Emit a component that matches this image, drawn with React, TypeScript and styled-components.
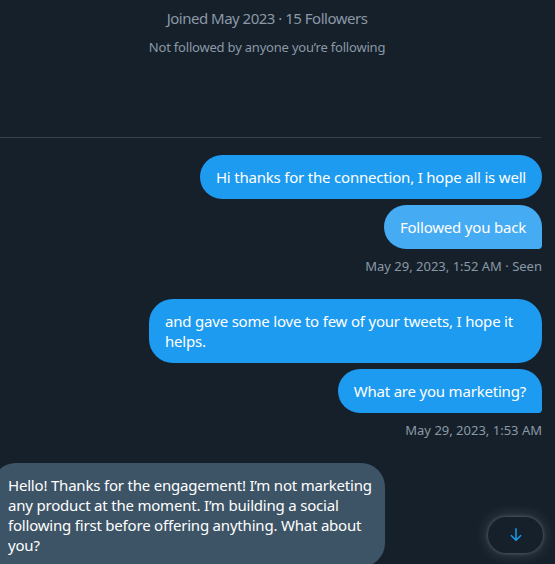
import React from "react";
import styled, { createGlobalStyle } from "styled-components";

const Global = createGlobalStyle`
  html, body { margin: 0; padding: 0; background: #15202b; }
  body { font-family: "Noto Sans", "Liberation Sans", sans-serif; color: #e7e9ea; }
  #root { width: 555px; height: 564px; overflow: hidden; position: relative; }
`;

const Page = styled.div`
  width: 550px;
  margin-left: -8px;
  display: flex;
  flex-direction: column;
  letter-spacing: -0.2px;
`;

const ProfileInfo = styled.div`
  display: flex;
  flex-direction: column;
  align-items: center;
  padding-top: 8px;
  color: #8b98a5;
`;

const InfoLine = styled.div<{ $small?: boolean }>`
  font-size: ${(p) => (p.$small ? "13px" : "15px")};
  line-height: ${(p) => (p.$small ? "16px" : "20px")};
  letter-spacing: ${(p) => (p.$small ? "-0.2px" : "-0.5px")};
  margin-top: ${(p) => (p.$small ? "11px" : "0")};
`;

const Divider = styled.div`
  margin-top: 82px;
  height: 1px;
  width: 549px;
  background: #38444d;
`;

const Thread = styled.div`
  display: flex;
  flex-direction: column;
  padding-top: 17px;
`;

const Group = styled.div<{ $in?: boolean }>`
  display: flex;
  flex-direction: column;
  align-items: ${(p) => (p.$in ? "flex-start" : "flex-end")};
  gap: 6px;
  margin-bottom: ${(p) => (p.$in ? "0" : "25px")};
`;

const Bubble = styled.div<{ $in?: boolean; $last?: boolean; $light?: boolean }>`
  max-width: 393px;
  box-sizing: border-box;
  padding: ${(p) => (p.$in ? "12px 12px 12px 16px" : "12px 16px")};
  font-size: 15px;
  line-height: 20px;
  color: #ffffff;
  background: ${(p) => (p.$in ? "#3d5466" : p.$light ? "#45abf2" : "#1d9bf0")};
  border-radius: 24px;
  ${(p) => (p.$last && !p.$in ? "border-bottom-right-radius: 4px;" : "")}
  ${(p) => (p.$in ? "border-bottom-left-radius: 4px;" : "")}
  overflow-wrap: break-word;
`;

const Meta = styled.div`
  margin-top: 3px;
  font-size: 13px;
  line-height: 16px;
  letter-spacing: 0;
  color: #8b98a5;
`;

const ScrollButton = styled.button`
  position: absolute;
  right: 12px;
  bottom: 11px;
  width: 55px;
  height: 36px;
  border: none;
  border-radius: 9999px;
  background: #15202b;
  box-shadow: rgba(255, 255, 255, 0.2) 0 0 15px, rgba(255, 255, 255, 0.15) 0 0 3px 1px;
  display: flex;
  align-items: center;
  justify-content: center;
  padding: 0;
  cursor: pointer;
`;

const ArrowIcon = () => (
  <svg width="18" height="18" viewBox="0 0 24 24" fill="#1d9bf0" aria-hidden="true">
    <path d="M13 3v13.59l5.043-5.05 1.414 1.42L12 20.41l-7.457-7.45 1.414-1.42L11 16.59V3h2z" />
  </svg>
);

export default function App() {
  return (
    <>
      <Global />
      <Page>
        <ProfileInfo>
          <InfoLine>Joined May 2023 · 15 Followers</InfoLine>
          <InfoLine $small>Not followed by anyone you’re following</InfoLine>
        </ProfileInfo>
        <Divider />
        <Thread>
          <Group>
            <Bubble>Hi thanks for the connection, I hope all is well</Bubble>
            <Bubble $last $light>Followed you back</Bubble>
            <Meta>May 29, 2023, 1:52 AM · Seen</Meta>
          </Group>
          <Group>
            <Bubble>and gave some love to few of your tweets, I hope it helps.</Bubble>
            <Bubble $last>What are you marketing?</Bubble>
            <Meta>May 29, 2023, 1:53 AM</Meta>
          </Group>
          <Group $in>
            <Bubble $in>
              Hello! Thanks for the engagement! I’m not marketing any product at the moment. I’m building a social following first before offering anything. What about you?
            </Bubble>
          </Group>
        </Thread>
      </Page>
      <ScrollButton aria-label="Scroll to bottom">
        <ArrowIcon />
      </ScrollButton>
    </>
  );
}
